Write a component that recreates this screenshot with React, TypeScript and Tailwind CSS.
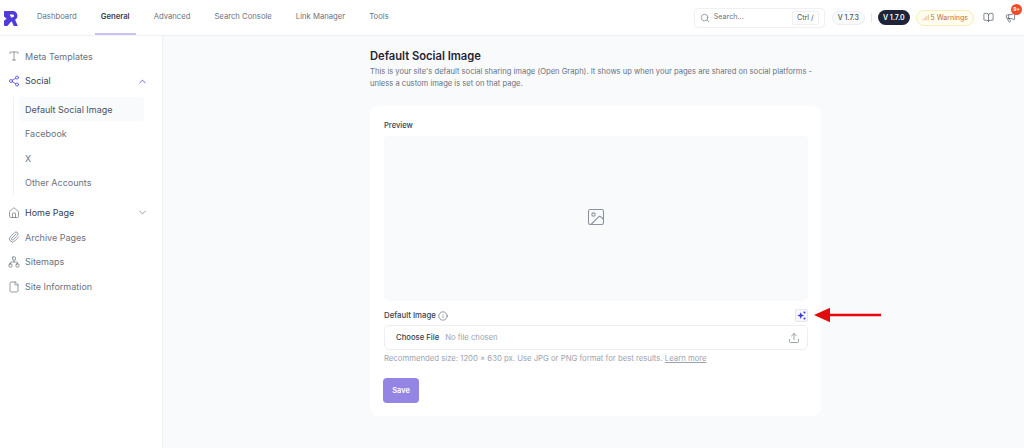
import React from "react";
import {
  BookOpen,
  ChevronDown,
  ChevronUp,
  File,
  Image,
  Info,
  Megaphone,
  Network,
  Paperclip,
  Search,
  Share2,
  Signal,
  Type,
  Upload,
  House,
} from "lucide-react";

const tabs = ["Dashboard", "General", "Advanced", "Search Console", "Link Manager", "Tools"];

function Logo() {
  return (
    <svg viewBox="0 0 14 15" className="h-[15px] w-[14px]">
      <path
        fill="#4f3bd8"
        d="M1 0h7.500C11.500 0 13.400 2.100 13.400 4.800c0 1.800-.9 3.200-2.300 4l2.700 6.200H9.800L7.700 10.200 5.500 12.600 3.400 15H1c-.6 0-1-.4-1-1V9.800l2.600-2L0 5.600V1c0-.6.4-1 1-1z"
      />
      <path fill="#fff" d="M5.600 3.400h3c.9 0 1.400.6 1.400 1.400 0 .7-.5 1.300-1.200 1.400l-1.600.2z" />
    </svg>
  );
}

function Header() {
  return (
    <header className="flex h-9 shrink-0 items-stretch border-b border-[#f0f1f4] bg-white pl-[4px] pr-[8px]">
      <div className="flex w-[27px] items-center pt-[1px]">
        <Logo />
      </div>
      <nav className="flex items-stretch gap-[12px]">
        {tabs.map((t) => (
          <a
            key={t}
            className={
              t === "General"
                ? "flex items-center border-b-2 border-[#c9c2f2] px-[6px] text-[7.700px] font-semibold text-[#374151]"
                : "flex items-center border-b-2 border-transparent px-[6px] text-[7.700px] text-[#6b7280]"
            }
          >
            {t}
          </a>
        ))}
      </nav>
      <div className="ml-auto flex items-center">
        <div className="flex h-[20px] w-[131px] items-center rounded-[4px] border border-[#eef0f3] pl-[5px] pr-[5px]">
          <Search size={10} strokeWidth={1.5} className="text-[#6b7280]" />
          <span className="ml-[4px] text-[7.200px] text-[#6b7280]">Search...</span>
          <span className="ml-auto rounded-[2px] border border-[#eef0f3] px-[4px] py-[1.500px] text-[7.200px] leading-[9px] text-[#4b5563]">
            Ctrl /
          </span>
        </div>
        <span className="ml-[7px] rounded-full border border-[#eceef2] bg-[#f9fafb] px-[5px] py-[1.500px] text-[7px] font-medium leading-[9px] text-[#4b5563]">
          V 1.7.3
        </span>
        <span className="ml-[6px] h-[9px] w-px bg-[#e5e7eb]" />
        <span className="ml-[6px] rounded-full bg-[#1f2438] px-[5px] py-[3px] text-[7px] font-semibold leading-[9px] text-white">
          V 1.7.0
        </span>
        <span className="ml-[6px] flex items-center rounded-full border border-[#fdeeb5] bg-[#fffcf0] px-[5px] py-[2px] text-[7px] leading-[10px] text-[#c2703a]">
          <Signal size={7} strokeWidth={2} className="mr-[2px] text-[#d9a26b]" />
          5 Warnings
        </span>
        <BookOpen size={11} strokeWidth={1.5} className="ml-[9px] text-[#4b5563]" />
        <div className="relative ml-[11px]">
          <Megaphone size={11} strokeWidth={1.5} className="text-[#4b5563]" />
          <span className="absolute -right-[6px] -top-[8px] flex h-[11px] w-[11px] items-center justify-center rounded-full bg-[#ee4b2b] text-[5px] font-bold text-white">
            9+
          </span>
        </div>
      </div>
    </header>
  );
}

function NavItem({
  icon,
  label,
  dark,
  chevron,
}: {
  icon: React.ReactNode;
  label: string;
  dark?: boolean;
  chevron?: React.ReactNode;
}) {
  return (
    <div className="flex h-[24.700px] items-center pl-[8px] pr-[14px]">
      <span className="flex w-[17px] text-[#6b7280]">{icon}</span>
      <span className={dark ? "text-[9px] text-[#374151]" : "text-[9px] text-[#6b7280]"}>{label}</span>
      {chevron && <span className="ml-auto">{chevron}</span>}
    </div>
  );
}

function Sidebar() {
  return (
    <aside className="w-[163px] shrink-0 border-r border-[#eef0f3] bg-white pt-[8px]">
      <NavItem icon={<Type size={12} strokeWidth={1.4} />} label="Meta Templates" />
      <NavItem
        icon={<Share2 size={12} strokeWidth={1.6} className="text-[#4f46e5]" />}
        label="Social"
        dark
        chevron={<ChevronUp size={11} strokeWidth={1.8} className="text-[#4f46e5]" />}
      />
      <div className="ml-[13px] mt-[4px] border-l border-[#f0f1f4] pl-[5px] pr-[5px]">
        <div className="flex h-[24px] w-[125px] items-center rounded-[3px] bg-[#f9fafb] pl-[6px] text-[9px] text-[#4b5563]">
          Default Social Image
        </div>
        {["Facebook", "X", "Other Accounts"].map((s) => (
          <div key={s} className="flex h-[24.700px] items-center pl-[6px] text-[9px] text-[#6b7280]">
            {s}
          </div>
        ))}
      </div>
      <div className="h-[5px]" />
      <NavItem
        icon={<House size={12} strokeWidth={1.4} />}
        label="Home Page"
        dark
        chevron={<ChevronDown size={11} strokeWidth={1.5} className="text-[#6b7280]" />}
      />
      <NavItem icon={<Paperclip size={12} strokeWidth={1.4} />} label="Archive Pages" />
      <NavItem icon={<Network size={12} strokeWidth={1.4} />} label="Sitemaps" />
      <NavItem icon={<File size={12} strokeWidth={1.4} />} label="Site Information" />
    </aside>
  );
}

function Sparkle() {
  return (
    <svg viewBox="0 0 12 12" className="h-[9px] w-[9px]">
      <path fill="#3b35d9" d="M5 1.500 6.200 4.800 9.500 6 6.200 7.200 5 10.500 3.800 7.200.5 6 3.800 4.800z" />
      <circle cx="10" cy="2" r="1.300" fill="#3b35d9" />
      <circle cx="10" cy="10" r="1.300" fill="#3b35d9" />
    </svg>
  );
}

function Card() {
  return (
    <div className="mt-[16px] rounded-[8px] bg-white pb-[13px] pl-[14px] pr-[13px] pt-[14px]">
      <div className="text-[7.600px] font-medium leading-[11px] text-[#374151]">Preview</div>
      <div className="mt-[5px] flex h-[165px] items-center justify-center rounded-[4px] bg-[#f9fafb] pb-[3px]">
        <Image size={20} strokeWidth={1.3} className="text-[#8d939e]" />
      </div>
      <div className="mt-[7px] flex h-[15px] items-center">
        <span className="text-[7.800px] font-medium text-[#374151]">Default Image</span>
        <Info size={10} strokeWidth={1.4} className="ml-[2px] text-[#4b5563]" />
        <span className="ml-auto flex h-[13px] w-[13px] items-center justify-center rounded-[2px] border border-[#e5e7eb] bg-[#f5f6ff]">
          <Sparkle />
        </span>
      </div>
      <div className="mt-[2px] flex h-[25px] items-center rounded-[5px] border border-[#eceef2] pl-[11px] pr-[7px]">
        <span className="text-[7.700px] font-medium text-[#374151]">Choose File</span>
        <span className="ml-[6px] text-[7.700px] text-[#9ca3af]">No file chosen</span>
        <Upload size={12} strokeWidth={1.3} className="ml-auto text-[#6b7280]" />
      </div>
      <p className="mt-[3px] text-[7.740px] leading-[11px] text-[#9ca3af]">
        Recommended size: 1200 x 630 px. Use JPG or PNG format for best results.{" "}
        <span className="underline">Learn more</span>
      </p>
      <button className="-ml-px mt-[14px] h-[25px] w-[36px] rounded-[4px] bg-[#9484e4] text-[7.400px] font-semibold text-white">
        Save
      </button>
    </div>
  );
}

export default function App() {
  return (
    <div className="relative flex h-[448px] w-[1024px] flex-col overflow-hidden bg-[#f9fafb] font-['Inter',sans-serif]">
      <Header />
      <div className="flex min-h-0 flex-1">
        <Sidebar />
        <main className="flex-1 pl-[207px] pt-[13px]">
          <div className="w-[451px]">
            <h1 className="text-[11.200px] font-semibold leading-[15px] text-[#1f2438]">Default Social Image</h1>
            <p className="mt-[2px] text-[7.600px] leading-[12px] text-[#6b7280]">
              This is your site's default social sharing image (Open Graph). It shows up when your pages are shared on
              social platforms - unless a custom image is set on that page.
            </p>
            <Card />
          </div>
        </main>
      </div>
      {/* annotation arrow */}
      <svg viewBox="0 0 70 16" className="absolute left-[813px] top-[307px] h-[16px] w-[70px]">
        <path d="M1 8 17 .8V6.800H68V9.200H17V15.200z" fill="#e30b0b" />
      </svg>
    </div>
  );
}
